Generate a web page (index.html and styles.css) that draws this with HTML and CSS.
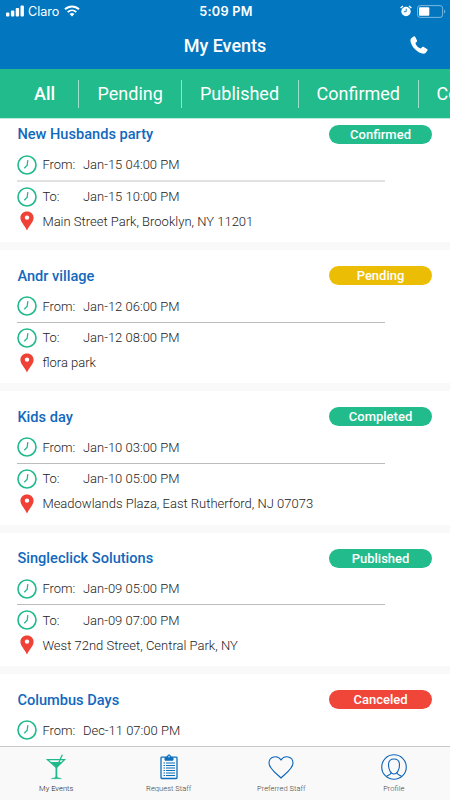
FILE: index.html
```html
<!DOCTYPE html>
<html lang="en">
<head>
    <meta charset="UTF-8">
    <meta name="viewport" content="width=device-width, initial-scale=1.0">
    <title>My Events</title>
    <link rel="stylesheet" href="styles.css">
</head>
<body>
    <!-- Shared icons -->
    <svg class="sprite">
        <symbol id="clock" viewBox="0 0 20 20">
            <circle cx="10" cy="10" r="9" fill="none" stroke="#1fba8b" stroke-width="1.6"/>
            <path d="M10.8 5.2 L10.2 10.3 L7.3 13.2" fill="none" stroke="#1fba8b" stroke-width="1.3"/>
        </symbol>
        <symbol id="pin" viewBox="0 0 14 20">
            <path fill="#ef4136" fill-rule="evenodd" d="M7 0.5 C3.2 0.5 0.4 3.2 0.4 6.8 C0.4 11 4.5 14 7 19.5 C9.5 14 13.6 11 13.6 6.8 C13.6 3.2 10.8 0.5 7 0.5 Z M7 4.4 A2.2 2.2 0 1 1 7 8.8 A2.2 2.2 0 1 1 7 4.4 Z"/>
        </symbol>
    </svg>

    <div class="app">
        <header class="header">
            <div class="status-bar">
                <div class="status-left">
                    <svg class="signal" viewBox="0 0 18 12" fill="#fff">
                        <rect x="0" y="7.5" width="3.4" height="4" rx="1"/>
                        <rect x="4.9" y="5.5" width="3.4" height="6" rx="1"/>
                        <rect x="9.7" y="3" width="3.4" height="8.5" rx="1"/>
                        <rect x="14.5" y="0.5" width="3.4" height="11" rx="1"/>
                    </svg>
                    <span class="carrier">Claro</span>
                    <svg class="wifi" viewBox="0 0 16 12">
                        <path d="M1 4.3 C5 0.4 11 0.4 15 4.3" fill="none" stroke="#fff" stroke-width="2"/>
                        <path d="M3.7 7.1 C6.2 4.8 9.8 4.8 12.3 7.1" fill="none" stroke="#fff" stroke-width="1.9"/>
                        <path d="M5.6 9 C7 7.8 9 7.8 10.4 9 L8 11.5 Z" fill="#fff"/>
                    </svg>
                </div>
                <div class="time">5:09 PM</div>
                <div class="status-right">
                    <svg class="alarm" viewBox="0 0 12 12">
                        <circle cx="6" cy="6.5" r="4.7" fill="#fff"/>
                        <path d="M0.6 3 L3 0.9 M11.4 3 L9 0.9" stroke="#fff" stroke-width="1.3"/>
                        <path d="M6.2 3.7 V6.7 H3.9" fill="none" stroke="#0277c0" stroke-width="0.9"/>
                    </svg>
                    <svg class="battery" viewBox="0 0 29 13">
                        <rect x="0.6" y="0.6" width="25" height="11.8" rx="2.5" fill="none" stroke="#7ab9df" stroke-width="1"/>
                        <rect x="2" y="2.2" width="10.3" height="8.6" rx="1" fill="#fff"/>
                        <path d="M27.1 4.5 Q29.5 6.5 27.1 8.5 Z" fill="#7ab9df"/>
                    </svg>
                </div>
            </div>
            <div class="title-bar">
                <h1>My Events</h1>
                <svg class="phone" viewBox="0 0 18 18">
                    <path fill="#fff" d="M1.2 2.3 L3.6 0.5 C4.3 0.1 4.9 0.3 5.3 1 L7 4.4 C7.3 5.1 7.1 5.6 6.5 6.1 L5.4 7.1 C5.8 9.6 8.3 12 10.9 12.5 L12 11.3 C12.5 10.8 13.1 10.7 13.7 11 L17 13 C17.7 13.4 17.8 14 17.4 14.6 L15.6 16.9 C13.5 18.8 8.5 16.8 5 13.3 C1.4 9.8 -0.8 4.5 1.2 2.3 Z"/>
                </svg>
            </div>
        </header>

        <nav class="tabs">
            <a class="tab tab-all active">All</a>
            <a class="tab tab-pending">Pending</a>
            <a class="tab tab-published">Published</a>
            <a class="tab tab-confirmed">Confirmed</a>
            <a class="tab tab-completed">Completed</a>
        </nav>

        <main class="events">
            <section class="event">
                <div class="event-head"><h2>New Husbands party</h2><span class="badge">Confirmed</span></div>
                <div class="row from"><svg class="clock"><use href="#clock"/></svg><span class="label">From:</span><span>Jan-15 04:00 PM</span></div>
                <div class="row to"><svg class="clock"><use href="#clock"/></svg><span class="label">To:</span><span>Jan-15 10:00 PM</span></div>
                <div class="row place"><svg class="pin"><use href="#pin"/></svg><span>Main Street Park, Brooklyn, NY 11201</span></div>
            </section>
            <section class="event">
                <div class="event-head"><h2>Andr village</h2><span class="badge pending">Pending</span></div>
                <div class="row from"><svg class="clock"><use href="#clock"/></svg><span class="label">From:</span><span>Jan-12 06:00 PM</span></div>
                <div class="row to"><svg class="clock"><use href="#clock"/></svg><span class="label">To:</span><span>Jan-12 08:00 PM</span></div>
                <div class="row place"><svg class="pin"><use href="#pin"/></svg><span>flora park</span></div>
            </section>
            <section class="event">
                <div class="event-head"><h2>Kids day</h2><span class="badge">Completed</span></div>
                <div class="row from"><svg class="clock"><use href="#clock"/></svg><span class="label">From:</span><span>Jan-10 03:00 PM</span></div>
                <div class="row to"><svg class="clock"><use href="#clock"/></svg><span class="label">To:</span><span>Jan-10 05:00 PM</span></div>
                <div class="row place"><svg class="pin"><use href="#pin"/></svg><span>Meadowlands Plaza, East Rutherford, NJ 07073</span></div>
            </section>
            <section class="event">
                <div class="event-head"><h2>Singleclick Solutions</h2><span class="badge">Published</span></div>
                <div class="row from"><svg class="clock"><use href="#clock"/></svg><span class="label">From:</span><span>Jan-09 05:00 PM</span></div>
                <div class="row to"><svg class="clock"><use href="#clock"/></svg><span class="label">To:</span><span>Jan-09 07:00 PM</span></div>
                <div class="row place"><svg class="pin"><use href="#pin"/></svg><span>West 72nd Street, Central Park, NY</span></div>
            </section>
            <section class="event">
                <div class="event-head"><h2>Columbus Days</h2><span class="badge canceled">Canceled</span></div>
                <div class="row from"><svg class="clock"><use href="#clock"/></svg><span class="label">From:</span><span>Dec-11 07:00 PM</span></div>
            </section>
        </main>

        <footer class="tab-bar">
            <a class="nav-item active">
                <svg viewBox="0 0 26 26" fill="none" stroke="#1fba8b" stroke-width="1.3">
                    <path d="M4.5 5.7 H21.5 L13.4 13.5 Z"/>
                    <path d="M7 8 H19 L13.4 13 Z" fill="#1fba8b" stroke="none"/>
                    <path d="M14.5 11.5 L19.3 0.8"/>
                    <path d="M13.4 12 V24" stroke-width="1.8"/>
                    <path d="M8.3 24.7 Q12.5 24 13.4 22.3 Q14.3 24 18.5 24.7 Z" fill="#1fba8b" stroke-width="0.5"/>
                </svg>
                <span>My Events</span>
            </a>
            <a class="nav-item">
                <svg viewBox="0 0 26 26" fill="none" stroke="#0d70bd">
                    <rect x="5" y="3.2" width="16" height="21.3" rx="0.8" stroke-width="1.3"/>
                    <path d="M9 6.2 V3.7 H11 C11 0 15 0 15 3.7 H17 V6.2 Z" fill="#0d70bd"/>
                    <circle cx="13" cy="2.7" r="0.7" fill="#fff" stroke="none"/>
                    <path d="M7.5 9 H9 M7.5 11.5 H9 M7.5 14 H9 M7.5 16.5 H9 M7.5 19 H9 M7.5 21.5 H9"/>
                    <path d="M10 9 H19 M10 11.5 H19 M10 14 H19 M10 16.5 H19 M10 19 H19 M10 21.5 H19" stroke-width="1.1"/>
                </svg>
                <span>Request Staff</span>
            </a>
            <a class="nav-item">
                <svg viewBox="0 0 26 26" fill="none" stroke="#0d65b8" stroke-width="1.1">
                    <path d="M13 24 C9 20 1 14.8 1 9 C1 2.2 9.8 0.6 13 6 C16.2 0.6 25 2.2 25 9 C25 14.8 17 20 13 24 Z"/>
                </svg>
                <span>Preferred Staff</span>
            </a>
            <a class="nav-item">
                <svg viewBox="0 0 26 26" fill="none" stroke="#0d65b8" stroke-width="1.1">
                    <circle cx="13" cy="13" r="12.3"/>
                    <path d="M13 5 C9.5 5 7.5 7.2 7.5 11 C7.5 15 9.5 20 13 20 C16.5 20 18.5 15 18.5 11 C18.5 7.2 16.5 5 13 5 Z"/>
                    <path d="M10.2 18.5 C10.2 20.5 8 21 5.3 22.5 M15.8 18.5 C15.8 20.5 18 21 20.7 22.5"/>
                </svg>
                <span>Profile</span>
            </a>
        </footer>
    </div>
</body>
</html>
```
FILE: styles.css
```css
* {
    margin: 0;
    padding: 0;
    box-sizing: border-box;
}

body {
    font-family: Roboto, "Liberation Sans", sans-serif;
    background: #fff;
    overflow: hidden;
}

.sprite {
    display: none;
}

svg {
    display: block;
    flex: none;
}

.app {
    display: flex;
    flex-direction: column;
    width: 450px;
    height: 800px;
    overflow: hidden;
}

.header {
    height: 69px;
    flex: none;
    background: #0277c0;
    color: #fff;
}

/* Status bar */
.status-bar {
    display: grid;
    grid-template-columns: 1fr auto 1fr;
    align-items: center;
    height: 22px;
    padding: 0 4px 0 6px;
}

.status-left,
.status-right {
    display: flex;
    align-items: center;
}

.status-right {
    justify-content: flex-end;
    gap: 5px;
}

.signal {
    width: 18px;
    height: 12px;
}

.carrier {
    margin: 0 5px 0 4px;
    font-family: Inter, sans-serif;
    font-size: 12.6px;
}

.wifi {
    width: 16px;
    height: 12px;
}

.time {
    font-family: Inter, sans-serif;
    font-size: 12.7px;
    font-weight: 600;
    letter-spacing: 0.3px;
}

.alarm {
    width: 12px;
    height: 12px;
}

.battery {
    width: 29px;
    height: 13px;
}

.title-bar {
    display: grid;
    grid-template-columns: 1fr auto 1fr;
    align-items: center;
    height: 47px;
    padding: 0 22px;
}

.title-bar h1 {
    grid-column: 2;
    font-size: 18px;
    font-weight: 500;
}

.phone {
    width: 18px;
    height: 18px;
    margin-bottom: 2px;
    justify-self: end;
}

/* Filter tabs */
.tabs {
    display: flex;
    align-items: center;
    flex: none;
    height: 50px;
    background: #22bb8b;
    border-bottom: 1px solid #bdeadc;
    color: #fff;
    position: relative;
    z-index: 1;
}

.tab {
    flex: none;
    height: 28px;
    line-height: 28px;
    padding-left: 18.5px;
    border-right: 1px solid #a0dfcb;
    font-size: 18px;
    white-space: nowrap;
}

.tab-all {
    width: 79px;
    padding-left: 34px;
    font-weight: 500;
}

.tab-pending {
    width: 103px;
}

.tab-published {
    width: 117px;
    padding-left: 18px;
}

.tab-confirmed {
    width: 120px;
    padding-left: 17.5px;
}

.tab-completed {
    padding-left: 17.5px;
}

/* Event list, scrolled a little under the tabs */
.events {
    flex: 1;
    min-height: 0;
    overflow: hidden;
    background: #f9f9f9;
}

.event {
    height: 133.33px;
    margin-bottom: 8px;
    padding: 15.6px 17.6px 0 17.4px;
    background: #fff;
}

.event:first-child {
    margin-top: -10.3px;
}

.event-head {
    display: flex;
    align-items: center;
    justify-content: space-between;
    height: 20px;
}

.event h2 {
    font-size: 14.6px;
    font-weight: 500;
    color: #1268bd;
}

.badge {
    width: 103px;
    height: 19px;
    margin-right: 0.4px;
    border-radius: 10px;
    background: #22bb8b;
    color: #fff;
    font-size: 13px;
    font-weight: 500;
    line-height: 19px;
    text-align: center;
}

.badge.pending {
    background: #ecbd05;
}

.badge.canceled {
    background: #ef4639;
}

.row {
    display: flex;
    align-items: center;
    width: 367.5px;
    font-size: 13px;
    font-weight: 300;
    color: #222;
    white-space: nowrap;
}

.from {
    height: 37px;
    padding-top: 5px;
    border-bottom: 1px solid #bcbcbc;
}

.event:first-child .from {
    height: 38px;
    border-bottom: 2px solid #e1e1e1;
}

.to {
    height: 30px;
}

.event:first-child .to {
    height: 29px;
}

.place {
    height: 20px;
}

.clock {
    width: 20px;
    height: 20px;
    margin-right: 5px;
}

.label {
    width: 40.5px;
}

.pin {
    width: 14px;
    height: 20px;
    margin: 0 8px 0 3px;
}

/* Bottom navigation */
.tab-bar {
    display: flex;
    flex: none;
    height: 54px;
    background: #f9f9f9;
    border-top: 1px solid #c8c8c8;
}

.nav-item {
    display: flex;
    flex-direction: column;
    align-items: center;
    width: 112.5px;
    padding-top: 7px;
    font-size: 7.6px;
    font-weight: 300;
    color: #444;
}

.nav-item svg {
    width: 26px;
    height: 26px;
    margin-bottom: 4px;
}

.nav-item.active {
    color: #222;
}
```
